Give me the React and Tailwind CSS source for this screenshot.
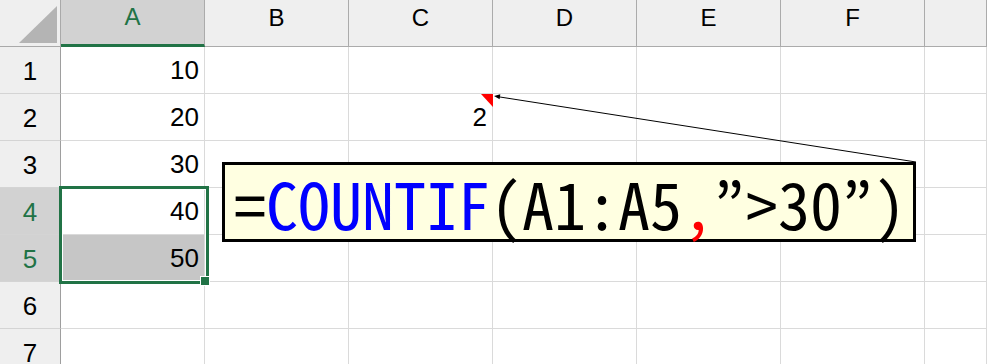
const cols = ["A", "B", "C", "D", "E", "F", ""];
const rows = [1, 2, 3, 4, 5, 6, 7];

const values = {
  "A1": "10",
  "A2": "20",
  "A3": "30",
  "A4": "40",
  "A5": "50",
  "C2": "2",
};

const selectedRows = [4, 5];

const Quote = () => (
  <span className="inline-block w-[0.5em] text-left">”</span>
);

const App = () => {
  return (
    <main className="relative w-[987px] h-[364px] overflow-hidden bg-white font-['Liberation_Sans',Arial,sans-serif] text-black">
      <div className="grid grid-cols-[61px_repeat(6,144px)_1fr] grid-rows-[47px_repeat(7,47px)]">
        {/* corner */}
        <div className="relative bg-[#efefef] border-r border-b border-[#a9a9a9]">
          <svg className="absolute inset-0" width="61" height="47">
            <polygon points="19,43 57,43 57,6" fill="#b4b4b4" />
          </svg>
        </div>
        {cols.map((c, i) =>
          c === "A" ? (
            <div
              key={i}
              className="flex items-center justify-center pb-[10px] bg-[#d2d2d2] border-r border-[#ababab] border-b-[3px] border-b-[#217346] text-[24px] text-[#217346]"
            >
              {c}
            </div>
          ) : (
            <div
              key={i}
              className="flex items-center justify-center pb-[10px] bg-[#efefef] border-r border-b border-[#ababab] text-[24px]"
            >
              {c}
            </div>
          )
        )}
        {rows.map((r) => (
          <div key={r} className="contents">
            <div
              className={`flex items-center justify-center pt-[2px] border-r border-r-[#9e9e9e] border-b border-b-[#d4d4d4] text-[26px] ${
                selectedRows.includes(r) ? "bg-[#d2d2d2] text-[#217346]" : "bg-[#efefef]"
              }`}
            >
              {r}
            </div>
            {cols.map((c, i) => (
              <div
                key={i}
                className={`flex items-center justify-end pr-[5px] pt-[1px] border-r border-b border-[#dadada] text-[26px] ${
                  c === "A" && r === 5 ? "bg-[#c6c6c6]" : ""
                }`}
              >
                {values[c + r]}
              </div>
            ))}
          </div>
        ))}
      </div>

      {/* selection A4:A5 */}
      <div className="absolute left-[59px] top-[186px] w-[150px] h-[98px] border-[3px] border-[#217346] shadow-[inset_0_0_0_1px_white]" />
      <div className="absolute left-[200px] top-[276px] w-[10px] h-[10px] bg-[#217346] border border-white" />

      {/* comment arrow + red marker */}
      <svg className="absolute inset-0 pointer-events-none" width="987" height="364">
        <polygon points="481,94 493,94 493,107" fill="#ff0000" />
        <line x1="916" y1="162" x2="498" y2="96.7" stroke="#000" strokeWidth="1" />
        <polygon points="494,96 500.3,94.2 499.6,99.2" fill="#000" />
      </svg>

      {/* comment box */}
      <div className="absolute left-[222px] top-[162px] w-[694px] h-[80px] border-[3px] border-black bg-[#ffffe1] flex items-center pl-[9px] text-[64px] leading-none font-['Noto_Sans_Mono_CJK_JP','Noto_Sans_CJK_JP','Liberation_Mono',monospace]">
        <span>=</span>
        <span className="text-[#0000ff]">COUNTIF</span>
        <span>(A1:A5</span>
        <span className="inline-block w-[0.5em] text-[#ff0000]">,</span>
        <Quote />
        <span>&gt;30</span>
        <Quote />
        <span>)</span>
      </div>
    </main>
  );
};

export default App;
